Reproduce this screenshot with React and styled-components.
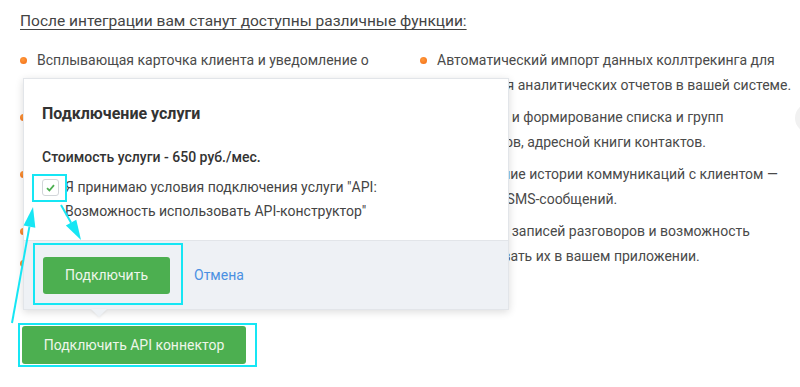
import React from 'react';
import styled, { createGlobalStyle } from 'styled-components';

const GlobalStyle = createGlobalStyle`
  html, body {
    margin: 0;
    padding: 0;
    background: #fff;
    overflow: hidden;
  }
  body {
    font-family: Roboto, "Liberation Sans", sans-serif;
    color: #444;
  }
`;

const Page = styled.div`
  position: relative;
  width: 800px;
  height: 387px;
  padding: 10px 20px 0;
  box-sizing: border-box;
`;

const Heading = styled.div`
  font-size: 15.5px;
  line-height: 22px;
  color: #444;
  text-decoration: underline;
  text-underline-offset: 3px;
`;

const Columns = styled.div`
  display: grid;
  grid-template-columns: 400px 380px;
  margin-top: 16px;
`;

const List = styled.ul`
  list-style: none;
  margin: 0;
  padding: 0;
  display: flex;
  flex-direction: column;
  gap: 7px;
  padding-right: ${p => p.$right}px;
`;

const Item = styled.li`
  position: relative;
  padding-left: 17px;
  font-size: 14px;
  line-height: 25px;
  color: #4a4a4a;

  &::before {
    content: '';
    position: absolute;
    left: 0;
    top: 9px;
    width: 7px;
    height: 7px;
    border-radius: 50%;
    background: radial-gradient(circle at 40% 35%, #ff9a3c, #f26a12);
  }
`;

const GreenButton = styled.button`
  display: flex;
  align-items: center;
  justify-content: center;
  width: ${p => p.$w}px;
  height: ${p => p.$h}px;
  background: #4caf50;
  border: none;
  border-radius: 3px;
  color: #eef6ea;
  font-family: Roboto, "Liberation Sans", sans-serif;
  font-size: 14px;
  padding: 0;
  cursor: pointer;
`;

const MainAction = styled.div`
  margin-top: 50px;
  margin-left: 2px;
`;

const Popover = styled.div`
  position: absolute;
  left: 23px;
  top: 78px;
  width: 486px;
  background: #fff;
  border: 1px solid #e2e5e9;
  box-sizing: border-box;
  box-shadow: 0 2px 8px rgba(0, 0, 0, 0.14);
  z-index: 2;

  &::after {
    content: '';
    position: absolute;
    left: 67px;
    bottom: -8px;
    width: 0;
    height: 0;
    border-left: 8px solid transparent;
    border-right: 8px solid transparent;
    border-top: 8px solid #eef1f5;
    filter: drop-shadow(0 1px 1px rgba(0, 0, 0, 0.08));
  }
`;

const PopBody = styled.div`
  padding: 24px 19px 17px 18px;
`;

const PopTitle = styled.div`
  font-size: 16px;
  line-height: 22px;
  font-weight: 700;
  color: #333;
`;

const Price = styled.div`
  margin-top: 22px;
  font-size: 14px;
  line-height: 20px;
  font-weight: 500;
  color: #333;
`;

const CheckRow = styled.label`
  display: flex;
  gap: 6px;
  margin-top: 8px;
  font-size: 14px;
  line-height: 24px;
  color: #444;
`;

const Box = styled.span`
  flex: none;
  display: flex;
  align-items: center;
  justify-content: center;
  width: 15px;
  height: 15px;
  margin-top: 4px;
  border: 1px solid #d2d5d9;
  border-radius: 3px;
  background: #fff;
`;

const CheckText = styled.span`
  max-width: 335px;
`;

const PopFooter = styled.div`
  display: flex;
  align-items: center;
  gap: 24px;
  height: 69px;
  padding: 0 19px;
  background: #eef1f5;
  border-top: 1px solid #e2e5e9;
  box-sizing: border-box;
`;

const Cancel = styled.a`
  font-size: 14px;
  color: #4a90e2;
  text-decoration: none;
  cursor: pointer;
`;

const ScrollKnob = styled.div`
  position: absolute;
  left: 795px;
  top: 103px;
  width: 30px;
  height: 30px;
  border-radius: 50%;
  background: #f1f1f1;
`;

const Overlay = styled.svg`
  position: absolute;
  left: 0;
  top: 0;
  pointer-events: none;
  z-index: 3;
`;

const leftItems = [
  'Всплывающая карточка клиента и уведомление о входящем звонке.',
  'Автоматическое создание карточки клиента и сделки в вашей системе.',
  'Совершение звонков в один клик из карточки клиента в CRM-системе.',
  'Автоматическая запись звонков.',
  'Распределение звонков.',
];

const rightItems = [
  'Автоматический импорт данных коллтрекинга для построения аналитических отчетов в вашей системе.',
  'Получение и формирование списка и групп сотрудников, адресной книги контактов.',
  'Отображение истории коммуникаций с клиентом — звонков и SMS-сообщений.',
  'Получение записей разговоров и возможность прослушивать их в вашем приложении.',
];

const arrow = (x1, y1, x2, y2) => {
  const dx = x2 - x1;
  const dy = y2 - y1;
  const len = Math.hypot(dx, dy);
  const ux = dx / len;
  const uy = dy / len;
  const bx = x2 - ux * 20;
  const by = y2 - uy * 20;
  const px = -uy * 6;
  const py = ux * 6;
  return (
    <g>
      <line x1={x1} y1={y1} x2={bx} y2={by} stroke="#16e6f4" strokeWidth="2" />
      <polygon
        points={`${x2},${y2} ${bx + px},${by + py} ${bx - px},${by - py}`}
        fill="#16e6f4"
      />
    </g>
  );
};

const App = () => (
  <>
    <GlobalStyle />
    <Page>
      <Heading>После интеграции вам станут доступны различные функции:</Heading>
      <Columns>
        <List $right={30}>
          {leftItems.map(t => <Item key={t}>{t}</Item>)}
        </List>
        <List $right={0}>
          {rightItems.map(t => <Item key={t}>{t}</Item>)}
        </List>
      </Columns>

      <MainAction>
        <GreenButton $w={224} $h={38}>Подключить API коннектор</GreenButton>
      </MainAction>

      <Popover>
        <PopBody>
          <PopTitle>Подключение услуги</PopTitle>
          <Price>Стоимость услуги - 650 руб./мес.</Price>
          <CheckRow>
            <Box>
              <svg width="9" height="8" viewBox="0 0 9 8">
                <path d="M1 4.2 L3.4 6.5 L8 1.2" fill="none" stroke="#4caf50" strokeWidth="1.8" />
              </svg>
            </Box>
            <CheckText>
              Я принимаю условия подключения услуги "API: Возможность использовать API-конструктор"
            </CheckText>
          </CheckRow>
        </PopBody>
        <PopFooter>
          <GreenButton $w={127} $h={37}>Подключить</GreenButton>
          <Cancel>Отмена</Cancel>
        </PopFooter>
      </Popover>

      <ScrollKnob />

      <Overlay width="800" height="387" viewBox="0 0 800 387">
        <g fill="none" stroke="#16e6f4" strokeWidth="2">
          <rect x="33" y="175" width="33" height="26" />
          <rect x="34" y="244" width="148" height="60" />
          <rect x="19" y="324" width="237" height="42" />
        </g>
        {arrow(12, 323, 33, 207)}
        {arrow(61, 205, 81, 240)}
      </Overlay>
    </Page>
  </>
);

export default App;
